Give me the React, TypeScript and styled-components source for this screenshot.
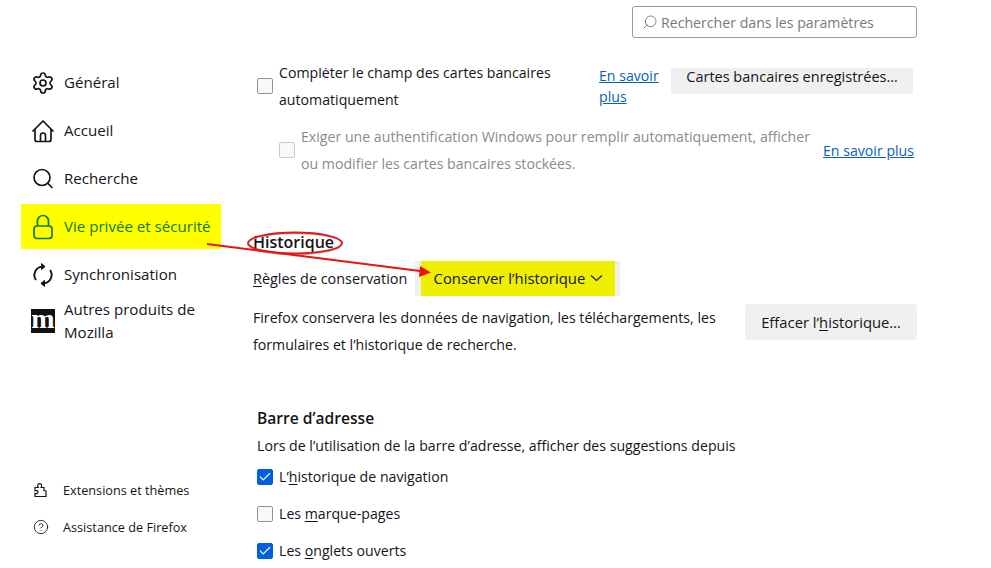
import React, { ReactNode } from "react";
import styled, { createGlobalStyle } from "styled-components";
import { Settings, Search, CircleHelp, Check } from "lucide-react";

const GlobalStyle = createGlobalStyle`
  html, body {
    margin: 0;
    height: 100%;
    overflow: hidden;
    background: #fff;
  }

  body {
    font-family: "Open Sans", "Noto Sans", "Liberation Sans", sans-serif;
    font-size: 14.15px;
    color: #15141a;
  }

  u {
    text-underline-offset: 2px;
  }
`;

const Page = styled.div`
  position: relative;
  display: flex;
  width: 991px;
  height: 568px;
  overflow: hidden;
`;

const Sidebar = styled.nav`
  display: flex;
  flex-direction: column;
  flex: 0 0 245px;
  box-sizing: border-box;
  padding: 60px 24px 30px 21px;
`;

const NavItem = styled.div<{ $active?: boolean; $lift?: number }>`
  display: flex;
  align-items: center;
  gap: 9px;
  height: 45px;
  margin-top: ${props => -(props.$lift || 0)}px;
  margin-bottom: 3px;
  padding-left: 10px;
  background: ${props => (props.$active ? "#ffff00" : "transparent")};
  color: ${props => (props.$active ? "#0b7a0b" : "#15141a")};
  font-size: 15.1px;
  line-height: 23px;
`;

const NavIcon = styled.span`
  display: flex;
  align-items: center;
  justify-content: center;
  flex: 0 0 24px;
  width: 24px;
  height: 24px;
`;

const MozillaLogo = styled.span`
  display: flex;
  align-items: center;
  justify-content: center;
  width: 24px;
  height: 24px;
  background: #111;
  color: #fff;
  font-family: "Liberation Serif", serif;
  font-size: 28px;
  font-weight: 700;
  line-height: 20px;
  padding-bottom: 4px;
  box-sizing: border-box;
`;

const SidebarFooter = styled.div`
  display: flex;
  flex-direction: column;
  gap: 15px;
  margin-top: auto;
  padding-left: 12px;
`;

const FooterLink = styled.div`
  display: flex;
  align-items: center;
  gap: 14px;
  height: 22px;
  font-size: 12.7px;
`;

const Main = styled.main`
  display: flex;
  flex-direction: column;
  flex: 1;
  min-width: 0;
  padding-right: 74px;
`;

const Header = styled.header`
  display: flex;
  justify-content: flex-end;
  flex: 0 0 68px;
  box-sizing: border-box;
  padding-top: 6px;
`;

const SearchBox = styled.div`
  display: flex;
  align-items: center;
  gap: 3px;
  box-sizing: border-box;
  width: 285px;
  height: 32px;
  padding-left: 9px;
  border: 1px solid #9a9a9a;
  border-radius: 3px;
  color: #7a7a7a;
`;

const Content = styled.div`
  flex: 1;
  min-height: 0;
  overflow: hidden;
`;

const Panel = styled.div`
  margin-top: -9px;
`;

const Row = styled.div<{ $indent: number; $top?: number }>`
  display: flex;
  align-items: center;
  margin-left: ${props => props.$indent}px;
  margin-top: ${props => props.$top || 0}px;
`;

const Box = styled.span<{ $checked?: boolean; $disabled?: boolean }>`
  display: flex;
  align-items: center;
  justify-content: center;
  flex: 0 0 16px;
  box-sizing: border-box;
  width: 16px;
  height: 16px;
  margin-right: 6px;
  border-radius: 2px;
  border: 1px solid
    ${props => (props.$checked ? "#0060df" : props.$disabled ? "#c9c9c9" : "#8f8f9d")};
  background: ${props => (props.$checked ? "#0060df" : "#f8f8f8")};
  color: #fff;
`;

const WrappedLabel = styled.div<{ $width: number; $muted?: boolean }>`
  flex: 0 0 ${props => props.$width}px;
  line-height: 27px;
  color: ${props => (props.$muted ? "#8a8a8f" : "#15141a")};
`;

const LearnMore = styled.a<{ $width: number; $shift: number }>`
  flex: 0 0 ${props => props.$width}px;
  margin-left: auto;
  align-self: ${props => (props.$shift ? "flex-end" : "flex-start")};
  padding-top: ${props => (props.$shift ? 0 : 6)}px;
  padding-bottom: ${props => props.$shift}px;
  color: #0a5fbd;
  line-height: 21px;
  text-decoration: underline;
`;

const Button = styled.div<{ $width: number; $height: number }>`
  display: flex;
  align-items: center;
  justify-content: center;
  flex: none;
  box-sizing: border-box;
  width: ${props => props.$width}px;
  height: ${props => props.$height}px;
  background: #f0f0f0;
  border-radius: 3px;
`;

const CardsButton = styled(Button)`
  align-self: flex-start;
  margin-left: 12px;
  margin-right: 4px;
  font-size: 14.5px;
`;

const Heading = styled.h2<{ $indent: number; $top: number; $size: number }>`
  margin: ${props => props.$top}px 0 0 ${props => props.$indent}px;
  font-size: ${props => props.$size}px;
  font-weight: 600;
  line-height: 24px;
`;

const RuleLabel = styled.span`
  width: 162px;
  font-size: 14.4px;
`;

const SelectWrap = styled.div`
  display: flex;
  align-items: center;
  justify-content: center;
  width: 205px;
  height: 35px;
  background: #f0f0f0;
`;

const SelectValue = styled.div`
  display: flex;
  align-items: center;
  gap: 5px;
  box-sizing: border-box;
  width: 194px;
  height: 35px;
  padding: 0 0 2px 13px;
  background: #eeee00;
  font-size: 14.9px;
`;

const HistoryText = styled.p`
  width: 480px;
  margin: 0;
  line-height: 27px;
`;

const ClearButton = styled(Button)`
  align-self: flex-start;
  margin-left: auto;
  font-size: 14.8px;
`;

const Intro = styled.p`
  margin: 5px 0 1px 12px;
  line-height: 22px;
  white-space: nowrap;
`;

const CheckRow = styled.div`
  display: flex;
  align-items: center;
  height: 37px;
  margin-left: 12px;
`;

const Annotation = styled.svg`
  position: absolute;
  inset: 0;
  pointer-events: none;
`;

const HomeIcon = () => (
  <svg width="24" height="24" viewBox="0 0 24 24" fill="none" stroke="currentColor" strokeWidth="1.7" strokeLinejoin="round">
    <path d="M1.5 12.5 12 2l10.5 10.5" />
    <path d="M4 10v10.5a2 2 0 0 0 2 2h12a2 2 0 0 0 2-2V10" />
    <path d="M9.5 22.5v-6a2.5 2.5 0 0 1 5 0v6" />
  </svg>
);

const LockIcon = () => (
  <svg width="24" height="26" viewBox="0 0 24 26" fill="none" stroke="currentColor" strokeWidth="1.7">
    <path d="M6.5 12V7a5.5 5.5 0 0 1 11 0v5" />
    <rect x="3" y="12" width="18" height="12.5" rx="3" />
  </svg>
);

const SyncIcon = () => (
  <svg width="24" height="24" viewBox="0 0 24 24" fill="none" stroke="currentColor" strokeWidth="1.9">
    <path d="M5 17a8.5 8.5 0 0 1 6-13.4" />
    <path d="M19 7a8.5 8.5 0 0 1-6 13.4" />
    <path d="M10.5 0.6v6l3.6-3z" fill="currentColor" strokeWidth="1" />
    <path d="M13.5 23.4v-6l-3.6 3z" fill="currentColor" strokeWidth="1" />
  </svg>
);

const PuzzleIcon = () => (
  <svg width="16" height="16" viewBox="0 0 16 16" fill="none" stroke="#15141a" strokeWidth="1.2">
    <path d="M2 5.5h3.2c-1-1.2-.8-3.6 1.4-3.8 2-.1 2.6 2.3 1.5 3.8H11v3c1 0 2 .3 2 0v6H2v-3c1.4.6 3-.2 3-1.5S3.4 8.2 2 8.8z" />
  </svg>
);

const Chevron = () => (
  <svg width="13" height="8" viewBox="0 0 13 8" fill="none" stroke="currentColor" strokeWidth="1.1">
    <path d="M1 1.5l5.5 5 5.5-5" />
  </svg>
);

interface CheckItemProps {
  checked?: boolean;
  children: ReactNode;
}

const CheckItem = ({ checked, children }: CheckItemProps) => (
  <CheckRow>
    <Box $checked={checked}>{checked && <Check size={14} strokeWidth={2} />}</Box>
    <span>{children}</span>
  </CheckRow>
);

const App = () => (
  <Page>
    <GlobalStyle />
    <Sidebar>
      <NavItem>
        <NavIcon><Settings size={24} strokeWidth={1.7} /></NavIcon>
        Général
      </NavItem>
      <NavItem>
        <NavIcon><HomeIcon /></NavIcon>
        Accueil
      </NavItem>
      <NavItem>
        <NavIcon><Search size={25} strokeWidth={1.7} /></NavIcon>
        Recherche
      </NavItem>
      <NavItem $active>
        <NavIcon><LockIcon /></NavIcon>
        Vie privée et sécurité
      </NavItem>
      <NavItem>
        <NavIcon><SyncIcon /></NavIcon>
        Synchronisation
      </NavItem>
      <NavItem $lift={2}>
        <NavIcon><MozillaLogo>m</MozillaLogo></NavIcon>
        <span>Autres produits de Mozilla</span>
      </NavItem>
      <SidebarFooter>
        <FooterLink>
          <PuzzleIcon />
          Extensions et thèmes
        </FooterLink>
        <FooterLink>
          <CircleHelp size={16} strokeWidth={1.3} />
          Assistance de Firefox
        </FooterLink>
      </SidebarFooter>
    </Sidebar>

    <Main>
      <Header>
        <SearchBox>
          <Search size={16} strokeWidth={1.4} style={{ transform: "scaleX(-1)" }} />
          Rechercher dans les paramètres
        </SearchBox>
      </Header>
      <Content>
        <Panel>
          <Row $indent={12}>
            <Box />
            <WrappedLabel $width={320}>
              Compléter le champ des cartes bancaires automatiquement
            </WrappedLabel>
            <LearnMore $width={60} $shift={0}>En savoir plus</LearnMore>
            <CardsButton $width={242} $height={35}>
              Cartes bancaires enregistrées…
            </CardsButton>
          </Row>
          <Row $indent={34} $top={10}>
            <Box $disabled />
            <WrappedLabel $width={516} $muted>
              Exiger une authentification Windows pour remplir automatiquement, afficher ou modifier les cartes bancaires stockées.
            </WrappedLabel>
            <LearnMore $width={94} $shift={16}>En savoir plus</LearnMore>
          </Row>
          <Heading $indent={8} $top={53} $size={16}>Historique</Heading>
          <Row $indent={8} $top={7}>
            <RuleLabel><u>R</u>ègles de conservation</RuleLabel>
            <SelectWrap>
              <SelectValue>
                Conserver l’historique
                <Chevron />
              </SelectValue>
            </SelectWrap>
          </Row>
          <Row $indent={8} $top={8}>
            <HistoryText>
              Firefox conservera les données de navigation, les téléchargements, les formulaires et l’historique de recherche.
            </HistoryText>
            <ClearButton $width={172} $height={36}>
              Effacer l’<u>h</u>istorique…
            </ClearButton>
          </Row>
          <Heading $indent={12} $top={48} $size={15.6}>Barre d’adresse</Heading>
          <Intro>Lors de l’utilisation de la barre d’adresse, afficher des suggestions depuis</Intro>
          <CheckItem checked>L’<u>h</u>istorique de navigation</CheckItem>
          <CheckItem>Les <u>m</u>arque-pages</CheckItem>
          <CheckItem checked>Les <u>o</u>nglets ouverts</CheckItem>
        </Panel>
      </Content>
    </Main>

    <Annotation width="991" height="568" viewBox="0 0 991 568">
      <ellipse cx="295" cy="244" rx="47" ry="10.5" fill="none" stroke="#b9b9b9" strokeWidth="1.5" />
      <ellipse cx="295" cy="243" rx="47" ry="10.5" fill="none" stroke="#e01a1a" strokeWidth="1.8" />
      <line x1="207" y1="244" x2="420" y2="271" stroke="#ee1111" strokeWidth="2" />
      <path d="M431 272.5 L419 277 L420 266 Z" fill="#ee1111" />
    </Annotation>
  </Page>
);

export default App;
